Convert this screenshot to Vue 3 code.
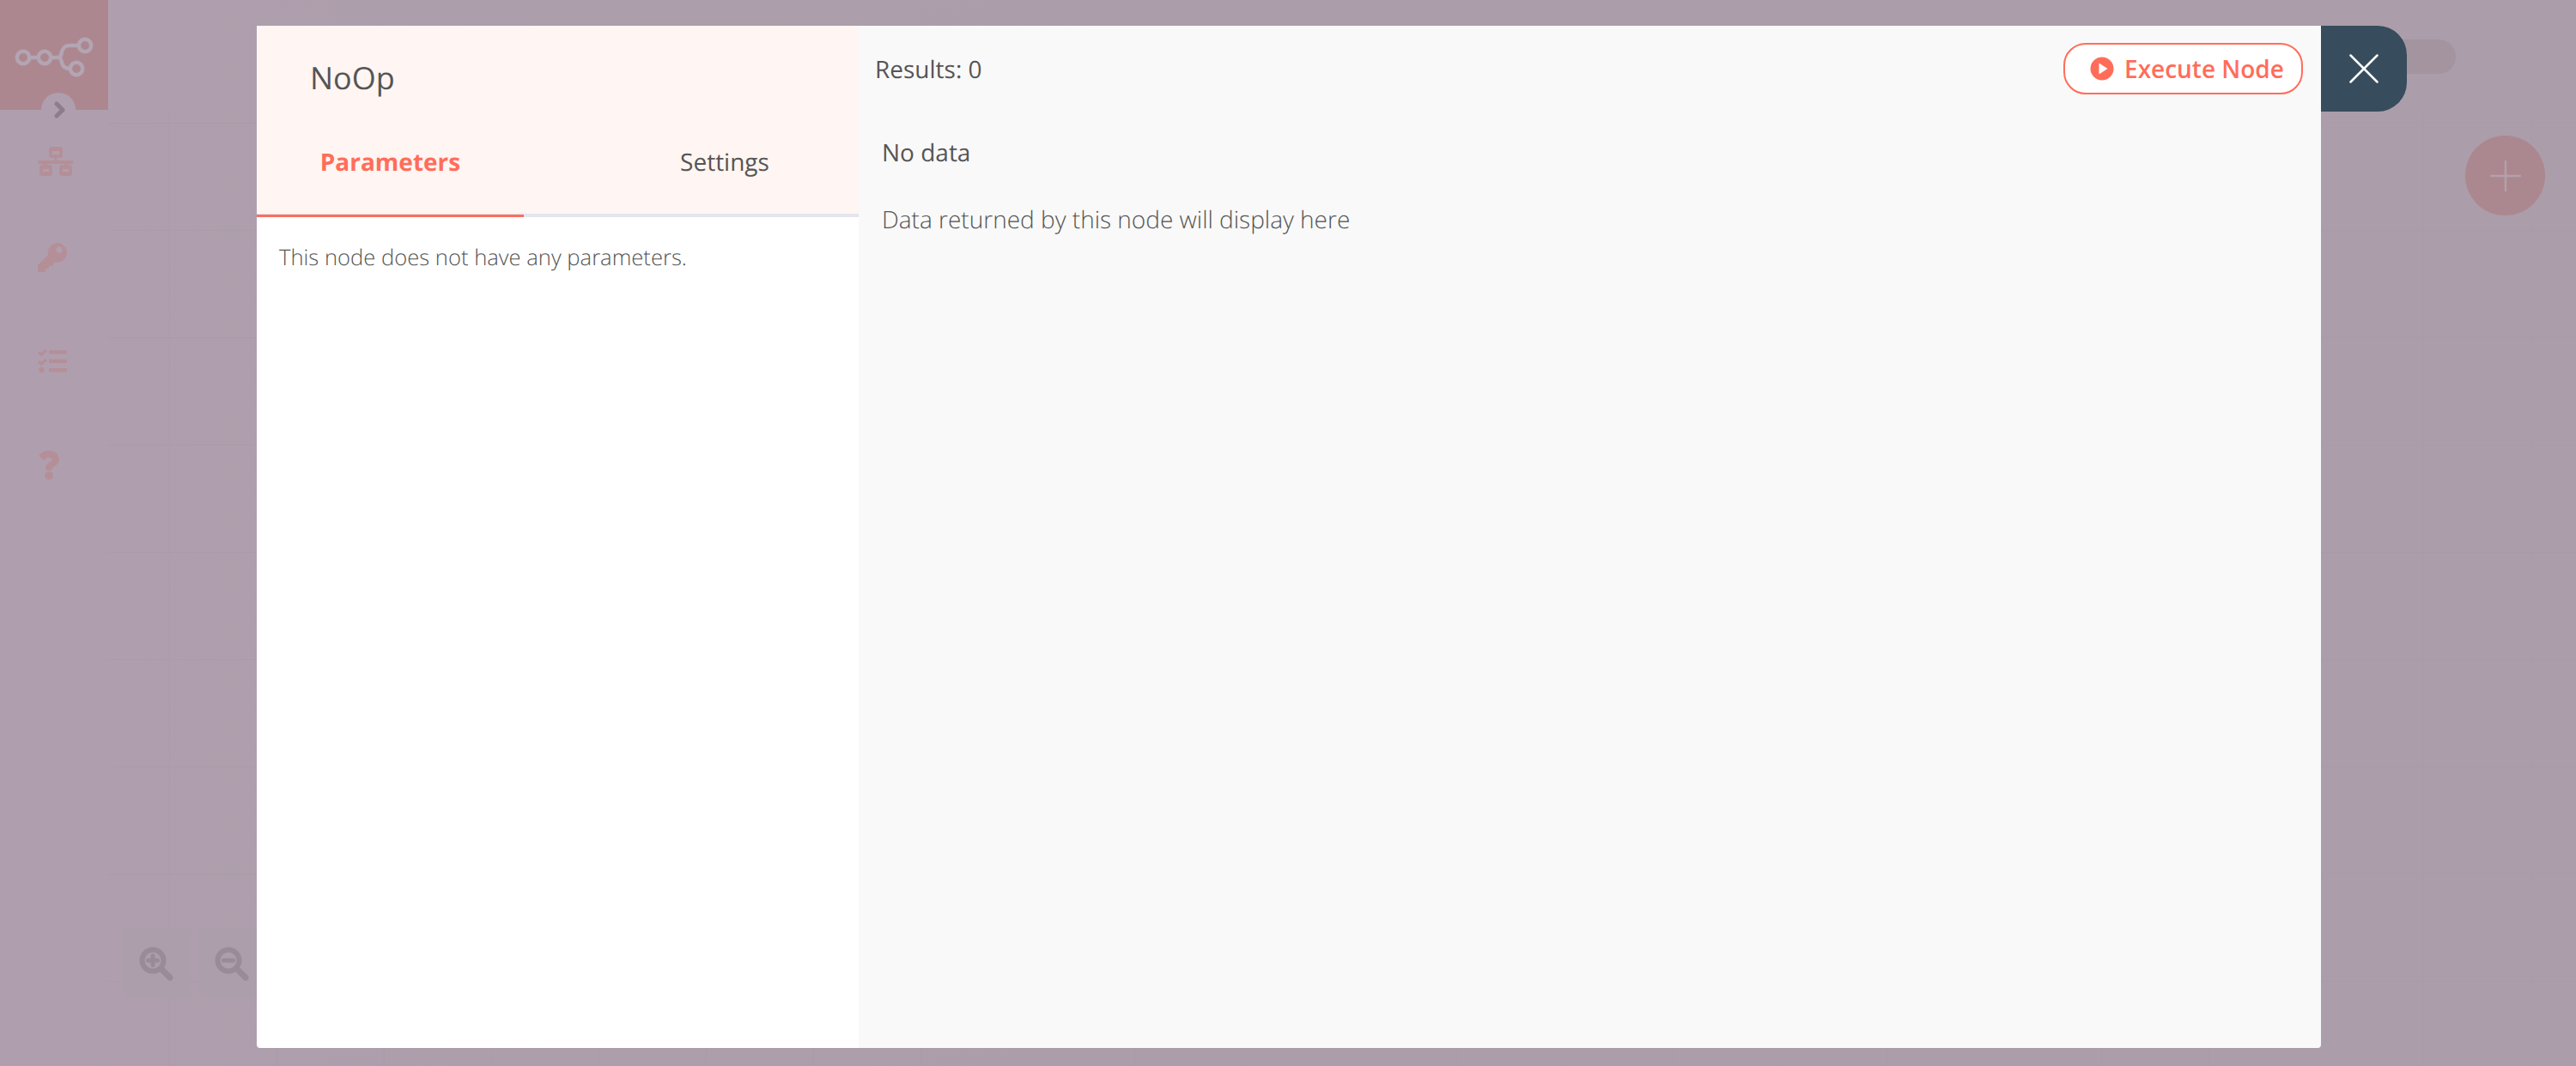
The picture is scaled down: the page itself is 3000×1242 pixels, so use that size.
<script setup>
const gridX = Array.from({ length: 23 }, (_, i) => 197 + i * 125)
const gridY = Array.from({ length: 10 }, (_, i) => 143 + i * 125)
</script>

<template>
  <div class="page">
    <aside class="sidebar">
      <div class="logo">
        <svg width="126" height="128" viewBox="0 0 126 128" fill="none" stroke="#b3a5b3" stroke-width="4.500">
          <circle cx="27" cy="67" r="7.200" />
          <circle cx="52" cy="67" r="7.200" />
          <circle cx="99" cy="53" r="7.200" />
          <circle cx="89" cy="80" r="7.200" />
          <path d="M34 67h11M59 67h9c3 0 3-3 4-7 2-5 4-7 9-7h11M68 67c3 0 3 3 4 6 1 5 4 7 10 7" />
        </svg>
      </div>
      <nav class="menu">
        <svg class="icon-net" width="42" height="34" viewBox="0 0 42 34">
          <g fill="#b58f98" fill-rule="evenodd">
            <path d="M16 0h10a3 3 0 0 1 3 3v7a3 3 0 0 1-3 3H16a3 3 0 0 1-3-3V3a3 3 0 0 1 3-3zM17 5v4h8V5z" />
            <path d="M19.500 13h3v3h17a2 2 0 0 1 0 4H35v1h2a3 3 0 0 1 3 3v7a3 3 0 0 1-3 3H28a3 3 0 0 1-3-3v-7a3 3 0 0 1 3-3h3v-1H11v1h3a3 3 0 0 1 3 3v7a3 3 0 0 1-3 3H5a3 3 0 0 1-3-3v-7a3 3 0 0 1 3-3h2v-1H2a2 2 0 0 1 0-4h17.500zM6 26v3h7v-3zM29 26v3h7v-3z" />
          </g>
        </svg>
        <svg class="icon-key" width="34" height="34" viewBox="0 0 34 34">
          <path fill="#b58f98" fill-rule="evenodd" d="M22.500 0a11.500 11.500 0 1 1-3 22.600L17 27h-4v3H9v4H0v-8l12-12a11.500 11.500 0 0 1 10.500-14zM25 4.500a3.500 3.500 0 1 0 0 7 3.500 3.500 0 0 0 0-7z" />
        </svg>
        <svg class="icon-tasks" width="34" height="30" viewBox="0 0 34 30">
          <g fill="none" stroke="#b58f98" stroke-width="3.500">
            <path d="M1 4l3 3 6-5M1 15l3 3 6-5" />
          </g>
          <circle cx="4.500" cy="25" r="3.300" fill="#b58f98" />
          <path fill="#b58f98" d="M13 2h21v4.500H13zM13 12.500h21V17H13zM13 23h21v4.500H13z" />
        </svg>
        <svg class="icon-help" width="24" height="34" viewBox="0 0 24 34">
          <path fill="#b58f98" d="M12 0c7 0 12 4 12 10 0 4-2 6-5 8-2 1.200-3 2-3 3.500V23H8v-2.500c0-3 1.500-5 4-6.500 2-1.200 3.500-2 3.500-3.500S14 8 12 8c-2.500 0-3.800 1-5.500 3.200L0 6.500C2.500 2.300 6.500 0 12 0z" />
          <circle cx="12" cy="29" r="5" fill="#b58f98" />
        </svg>
      </nav>
      <button class="expand">
        <svg width="14" height="20" viewBox="0 0 14 20"><path d="M3 3l7 7-7 7" fill="none" stroke="#8d7d8c" stroke-width="5" stroke-linecap="round" stroke-linejoin="round" /></svg>
      </button>
    </aside>

    <main class="canvas">
      <i v-for="x in gridX" :key="'x' + x" class="line-v" :style="{ left: x - 126 + 'px' }"></i>
      <i v-for="y in gridY" :key="'y' + y" class="line-h" :style="{ top: y + 'px' }"></i>
      <div class="toggle"></div>
      <div class="add">
        <svg width="36" height="36" viewBox="0 0 36 36"><path d="M18 1v34M1 18h34" stroke="#b5a0ab" stroke-width="2.500" stroke-linecap="round" /></svg>
      </div>
      <div class="zoom-tools">
        <div class="zoom-btn">
          <svg width="50" height="50" viewBox="0 0 50 50" fill="none" stroke="#9a8b99" stroke-width="6" stroke-linecap="round">
            <circle cx="20" cy="20" r="12.500" /><path d="M31 31l9 9" stroke-width="7" /><path d="M14.500 20h11M20 14.500v11" stroke-width="5" />
          </svg>
        </div>
        <div class="zoom-btn">
          <svg width="50" height="50" viewBox="0 0 50 50" fill="none" stroke="#9a8b99" stroke-width="6" stroke-linecap="round">
            <circle cx="20" cy="20" r="12.500" /><path d="M31 31l9 9" stroke-width="7" /><path d="M14.500 20h11" stroke-width="5" />
          </svg>
        </div>
      </div>
    </main>

    <section class="modal">
      <div class="panel-left">
        <header class="panel-head">
          <h1 class="title">NoOp</h1>
          <div class="tabs">
            <div class="tab active">Parameters</div>
            <div class="tab">Settings</div>
          </div>
        </header>
        <p class="empty-params">This node does not have any parameters.</p>
      </div>
      <div class="panel-right">
        <div class="results-bar">
          <span class="results">Results: 0</span>
          <button class="execute">
            <svg width="28" height="28" viewBox="0 0 28 28">
              <circle cx="14" cy="14" r="13.500" fill="#ff6d5a" />
              <path d="M10.500 7.500v13l10-6.500z" fill="#fff" />
            </svg>
            <span>Execute Node</span>
          </button>
        </div>
        <div class="no-data">No data</div>
        <div class="hint">Data returned by this node will display here</div>
      </div>
      <button class="close">
        <svg width="34" height="34" viewBox="0 0 34 34"><path d="M1.500 1.500l31 31M32.500 1.500l-31 31" stroke="#fff" stroke-width="2.500" stroke-linecap="round" /></svg>
      </button>
    </section>
  </div>
</template>

<style scoped>
.page {
  position: relative;
  display: flex;
  width: 3000px;
  height: 1242px;
  overflow: hidden;
  background: #ab9daa;
  font-family: "Open Sans", "Noto Sans", sans-serif;
  text-rendering: geometricPrecision;
}
.sidebar {
  position: relative;
  flex: 0 0 126px;
  background: #af9fae;
}
.logo {
  height: 128px;
  background: #ad878f;
}
.logo svg { display: block; }
.menu {
  position: relative;
  height: 600px;
}
.menu svg { position: absolute; }
.icon-net { left: 44px; top: 43px; }
.icon-key { left: 44px; top: 155px; }
.icon-tasks { left: 44px; top: 278px; }
.icon-help { left: 45px; top: 397px; }
.expand {
  position: absolute;
  left: 48px;
  top: 108px;
  display: flex;
  align-items: center;
  justify-content: center;
  width: 40px;
  height: 40px;
  padding: 0 0 0 4px;
  border: 0;
  border-radius: 50%;
  background: #af9fae;
}
.canvas {
  position: relative;
  flex: 1;
  background: linear-gradient(90deg, #af9fae 0, #ab9daa 40%, #ab9daa 100%);
}
.line-v {
  position: absolute;
  top: 128px;
  bottom: 0;
  width: 1px;
  background: #a99ba8;
}
.line-h {
  position: absolute;
  left: 0;
  right: 0;
  height: 1px;
  background: #a99ba8;
}
.toggle {
  position: absolute;
  right: 140px;
  top: 46px;
  width: 80px;
  height: 40px;
  border-radius: 20px;
  background: #a3949f;
}
.add {
  position: absolute;
  right: 36px;
  top: 158px;
  display: flex;
  align-items: center;
  justify-content: center;
  width: 93px;
  height: 93px;
  border-radius: 50%;
  background: #ab878f;
}
.zoom-tools {
  position: absolute;
  left: 17px;
  top: 1082px;
  display: flex;
  gap: 8px;
}
.zoom-btn {
  display: flex;
  align-items: center;
  justify-content: center;
  box-sizing: border-box;
  width: 80px;
  height: 80px;
  padding-top: 4px;
  background: #ac9eab;
}
.modal {
  position: absolute;
  left: 299px;
  top: 30px;
  display: flex;
  width: 2404px;
  height: 1191px;
}
.panel-left {
  flex: 0 0 701px;
  background: #fff;
  border-radius: 0 0 0 4px;
}
.panel-head {
  height: 223px;
  box-sizing: border-box;
  background: #fff5f2;
  border-bottom: 4px solid #e4e5ee;
}
.title {
  margin: 0;
  padding: 36px 0 0 62px;
  height: 100px;
  box-sizing: border-box;
  font-size: 36px;
  line-height: 50px;
  font-weight: 500;
  color: #555;
}
.tabs {
  display: flex;
  height: 123px;
}
.tab {
  flex: 0 0 311px;
  padding-top: 39px;
  box-sizing: border-box;
  height: 123px;
  font-size: 28px;
  line-height: 40px;
  color: #555;
  text-align: center;
}
.tab + .tab {
  flex: 0 0 390px;
  padding-left: 78px;
}
.tab.active {
  color: #ff6d5a;
  font-weight: 700;
  border-bottom: 3px solid #ff6d5a;
}
.empty-params {
  margin: 0;
  padding: 29px 26px;
  font-size: 25.600px;
  line-height: 36px;
  font-weight: 300;
  color: #555;
}
.panel-right {
  flex: 1;
  background: #f9f9f9;
  border-radius: 0 0 4px 0;
}
.results-bar {
  display: flex;
  align-items: center;
  justify-content: space-between;
  padding: 20px 21px 0 19px;
  height: 79px;
  box-sizing: border-box;
}
.results {
  font-size: 28px;
  line-height: 40px;
  color: #555;
  margin-top: 2px;
}
.execute {
  display: flex;
  align-items: center;
  gap: 12px;
  width: 279px;
  height: 60px;
  padding: 0 0 0 29px;
  box-sizing: border-box;
  border: 2px solid #ff6d5a;
  border-radius: 26px;
  background: #fff;
  font-family: inherit;
  font-size: 28px;
  font-weight: 600;
  color: #ff6d5a;
  white-space: nowrap;
}
.no-data {
  padding: 0 0 0 27px;
  margin-top: 49px;
  font-size: 28px;
  line-height: 40px;
  color: #555;
}
.hint {
  padding: 0 0 0 27px;
  margin-top: 38px;
  font-size: 28px;
  line-height: 40px;
  font-weight: 300;
  color: #555;
}
.close {
  position: absolute;
  left: 100%;
  top: 0;
  display: flex;
  align-items: center;
  justify-content: center;
  width: 100px;
  height: 100px;
  padding: 0;
  border: 0;
  border-radius: 0 34px 34px 0;
  background: #374c5c;
}
</style>

<style>
html, body { margin: 0; background: #ab9daa; }
</style>
